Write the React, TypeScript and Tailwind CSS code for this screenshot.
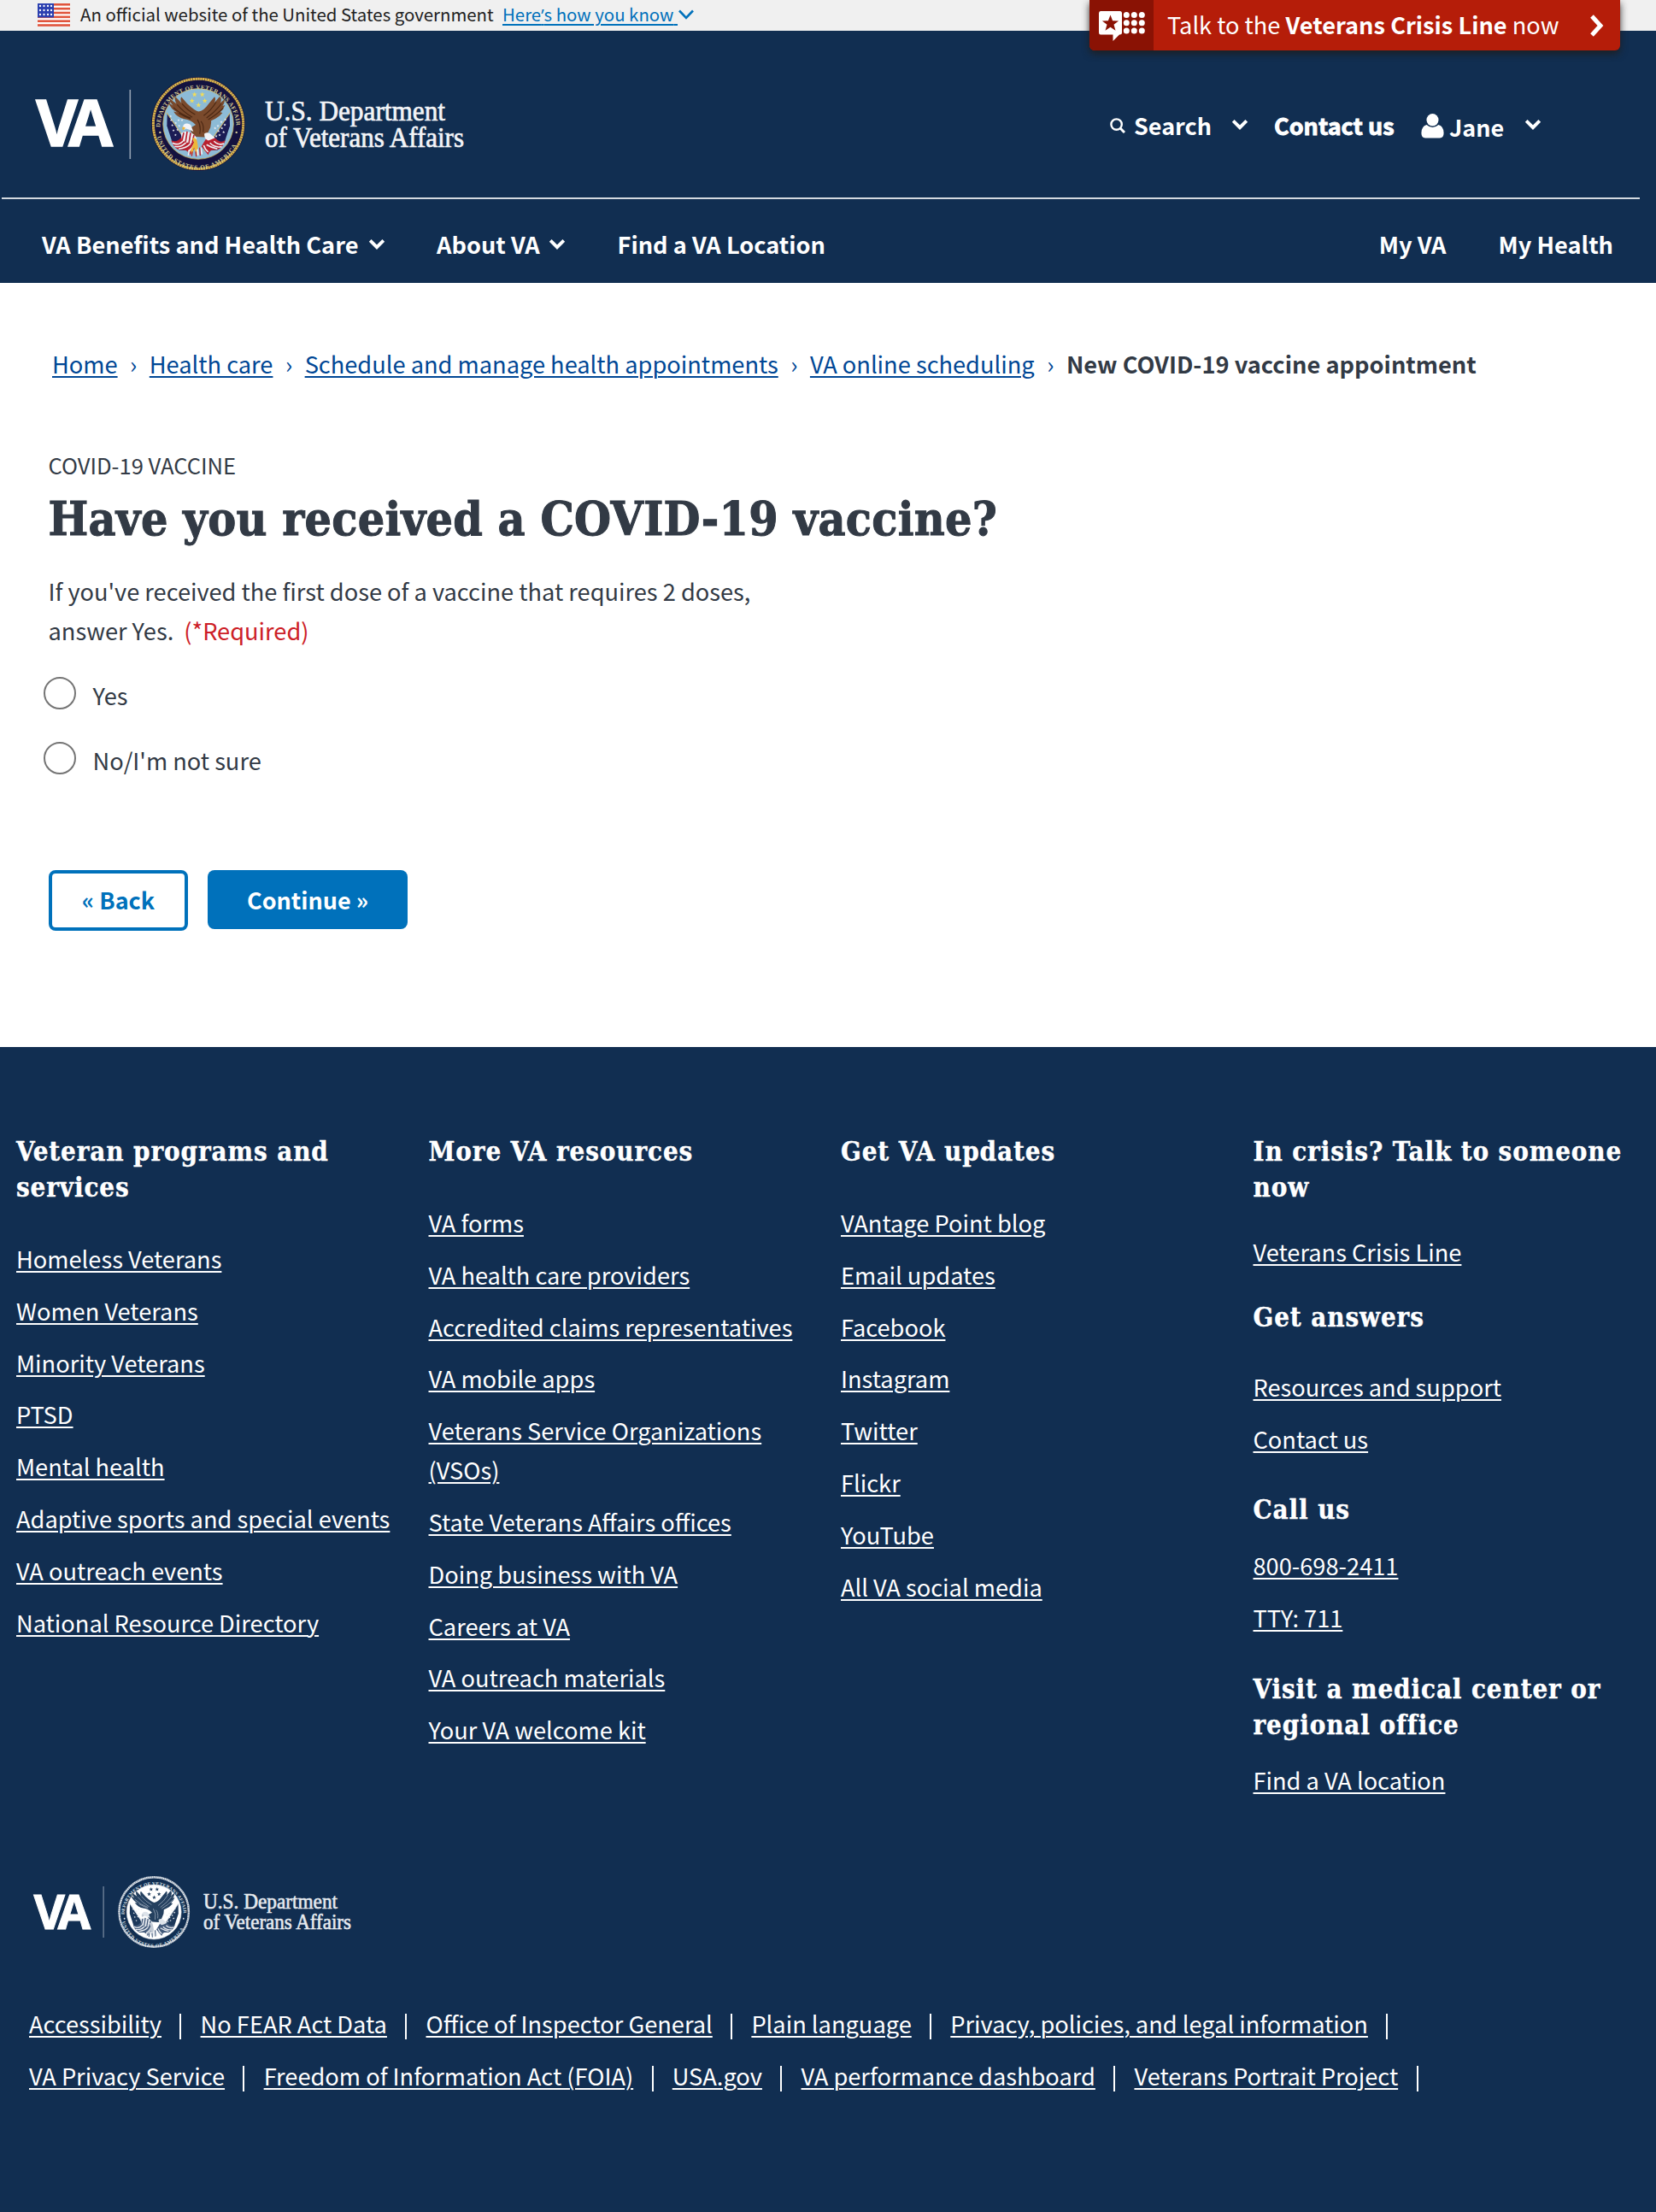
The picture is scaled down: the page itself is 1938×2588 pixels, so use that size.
import React from "react";

const STAR = "M0 -10 L2.6 -3.2 L9.6 -3.1 L4 1.3 L6 8.2 L0 4.2 L-6 8.2 L-4 1.3 L-9.6 -3.1 L-2.6 -3.2 Z";

function Star({ x, y, s, fill }: { x: number; y: number; s: number; fill: string }) {
  return <path d={STAR} fill={fill} transform={`translate(${x} ${y}) scale(${s})`} />;
}

const LEFT_STARS = [[122, 180], [138, 190], [126, 198], [150, 200], [130, 216], [144, 214], [160, 180], [137, 232], [120, 166], [148, 180]];
const RIGHT_STARS = [[312, 178], [298, 186], [310, 196], [286, 200], [300, 208], [288, 218], [276, 208], [306, 222], [292, 232], [280, 236]];

type Palette = {
  id: string;
  ring: string;
  gold: string;
  text: string;
  field: string;
  wing: string;
  wingDark: string;
  head: string;
  flag: string;
  red: string;
  white: string;
  beak: string;
  star: string;
};

const COLOR: Palette = {
  id: "c", ring: "#14123f", gold: "#e0b84a", text: "#d9cf95", field: "#8dbbd6", wing: "#7a4a2c", wingDark: "#4c2813",
  head: "#f2f4f8", flag: "#1b1c55", red: "#b8202f", white: "#eef0f4", beak: "#edb63a", star: "#f0dc5a",
};
const MONO: Palette = {
  id: "m", ring: "#112e51", gold: "#dfe4ea", text: "#dfe4ea", field: "#ffffff", wing: "#24405f", wingDark: "#8c9bae",
  head: "#dde3ea", flag: "#1c385a", red: "#41597a", white: "#e6eaef", beak: "#c2cad5", star: "#24405f",
};

function Seal({ p }: { p: Palette }) {
  return (
    <g>
      <circle cx="217" cy="193" r="165" fill={p.ring} />
      <circle cx="217" cy="193" r="158" fill="none" stroke={p.gold} strokeWidth="9" />
      <circle cx="217" cy="193" r="158" fill="none" stroke={p.ring} strokeWidth="9" strokeDasharray="2.5 6" opacity="0.55" />
      <circle cx="217" cy="193" r="124" fill={p.field} stroke={p.gold} strokeWidth="2" />
      <path id={`${p.id}-top`} d="M83 205 A134 134 0 1 1 351 205" fill="none" />
      <path id={`${p.id}-bottom`} d="M72 238 A149 149 0 0 0 362 238" fill="none" />
      <text fill={p.text} className="font-['Liberation_Serif'] text-[21px] font-bold">
        <textPath href={`#${p.id}-top`} textLength="428" lengthAdjust="spacing">DEPARTMENT OF VETERANS AFFAIRS</textPath>
      </text>
      <text fill={p.text} className="font-['Liberation_Serif'] text-[21px] font-bold">
        <textPath href={`#${p.id}-bottom`} textLength="366" lengthAdjust="spacing">UNITED STATES OF AMERICA</textPath>
      </text>
      <circle cx="83" cy="223" r="3.5" fill={p.text} />
      <circle cx="351" cy="223" r="3.5" fill={p.text} />

      {[[204, 90], [231, 90], [195, 112], [240, 112], [218, 127]].map(([x, y]) => (
        <Star key={`${x}-${y}`} x={x} y={y} s={0.95} fill={p.star} />
      ))}

      <path d="M108 157 L192 285 L150 285 Q132 272 124 252 L107 200 Z" fill={p.flag} />
      <path d="M327 157 L243 285 L285 285 Q303 272 311 252 L328 200 Z" fill={p.flag} />
      <path d="M106 154 L200 290" stroke={p.beak} strokeWidth="2.5" />
      <path d="M329 154 L236 290" stroke={p.beak} strokeWidth="2.5" />
      {LEFT_STARS.map(([x, y]) => <Star key={`l${x}-${y}`} x={x} y={y} s={0.45} fill={p.white} />)}
      {RIGHT_STARS.map(([x, y]) => <Star key={`r${x}-${y}`} x={x} y={y} s={0.5} fill={p.white} />)}

      <path d="M122 250 Q140 262 158 240 Q176 214 196 238 Q212 252 208 275 L188 302 Q180 282 158 285 Q132 284 122 250Z" fill={p.red} />
      <path d="M127 260 Q148 272 166 250 M134 272 Q158 278 178 254 M148 281 Q176 278 190 262 M162 238 L196 240 M168 228 L188 228 M182 290 Q196 280 204 262" stroke={p.white} strokeWidth="5" fill="none" />
      <path d="M312 250 Q294 262 280 246 Q262 232 244 246 L228 272 L252 302 Q256 282 276 285 Q302 284 312 250Z" fill={p.red} />
      <path d="M307 262 Q288 270 272 254 M300 273 Q276 278 258 260 M284 281 Q262 276 246 266 M252 292 Q240 282 236 268" stroke={p.white} strokeWidth="5" fill="none" />

      <path
        d="M208 196 Q190 178 168 176 Q142 170 130 150 L143 153 Q120 140 112 118 L128 129 Q118 118 118 106 L140 122 Q132 108 137 98 L158 120 Q152 104 158 99 L178 122 Q206 148 218 150 Q236 148 254 122 L274 98 Q280 104 274 118 L292 97 Q302 104 294 120 L308 108 Q312 118 302 130 L311 127 Q306 142 294 152 L302 154 Q288 172 262 182 Q264 202 252 222 L238 240 L210 238 Q190 226 188 208 Z"
        fill={p.wing}
      />
      <path
        d="M143 125 Q164 150 196 170 M130 136 Q156 160 190 172 M160 122 Q180 146 206 160 M148 156 Q170 168 190 176 M280 116 Q262 146 236 164 M298 122 Q276 152 246 172 M304 138 Q282 160 252 178 M226 184 Q238 196 234 222 M214 178 Q228 200 222 228"
        stroke={p.wingDark}
        strokeWidth="3.5"
        fill="none"
      />
      <path d="M162 206 Q164 191 178 192 Q192 193 194 206 L200 220 Q184 212 174 210 Q164 218 162 206Z" fill={p.head} />
      <path d="M163 203 Q158 208 164 216 Q170 212 172 207Z" fill={p.beak} />
      <path d="M238 228 Q252 218 266 234 L276 242 Q264 248 252 252 Q238 246 238 228Z" fill={p.head} />
      <path d="M156 226 Q176 212 204 232 L212 246 L190 262 L160 252 Z" fill={p.white} />
      <path d="M166 224 L160 252 M178 220 L172 258 M190 224 L184 262 M202 232 L196 258" stroke={p.red} strokeWidth="5" />
      <path d="M196 244 Q206 238 212 250 L216 272 L212 306 L202 276 L194 308 L190 288 L202 258 Z" fill={p.beak} />
      <path d="M214 282 L216 304 M186 284 L182 304 M226 276 L230 300" stroke={p.white} strokeWidth="5" />
      <path d="M208 290 L210 308 M196 290 L194 306 M222 276 L224 304" stroke={p.red} strokeWidth="4" />
    </g>
  );
}

function HeaderLogo() {
  return (
    <svg viewBox="0 0 560 130" className="h-[130px] w-[560px] shrink-0 overflow-visible font-normal">
      <text x="42 80" y="91" fill="#fff" stroke="#fff" strokeWidth="1.4" className="font-['Open_Sans'] text-[75.5px] font-bold">VA</text>
      <rect x="151.5" y="25" width="1.6" height="81" fill="#93a1b3" />
      <g transform="translate(159.7 0.6) scale(0.33333)">
        <Seal p={COLOR} />
      </g>
      <text x="310" y="60.5" textLength="211" lengthAdjust="spacingAndGlyphs" fill="#f3f5f8" stroke="#f3f5f8" strokeWidth="0.7" className="font-['Liberation_Serif'] text-[33.5px]">U.S. Department</text>
      <text x="310" y="91.5" textLength="233" lengthAdjust="spacingAndGlyphs" fill="#f3f5f8" stroke="#f3f5f8" strokeWidth="0.7" className="font-['Liberation_Serif'] text-[33.5px]">of Veterans Affairs</text>
    </svg>
  );
}

function FooterLogo() {
  return (
    <svg viewBox="0 0 420 110" className="block h-[110px] w-[420px] overflow-visible">
      <text x="39.5 67.5" y="77" fill="#fff" stroke="#fff" strokeWidth="1" className="font-['Open_Sans'] text-[56px] font-bold">VA</text>
      <rect x="120.5" y="27" width="1.2" height="60" fill="#7d8ea3" />
      <g transform="translate(124.2 7.2) scale(0.258)">
        <Seal p={MONO} />
      </g>
      <text x="238" y="53" textLength="157" lengthAdjust="spacingAndGlyphs" fill="#e6eaef" stroke="#e6eaef" strokeWidth="0.6" className="font-['Liberation_Serif'] text-[25px]">U.S. Department</text>
      <text x="238" y="77" textLength="173" lengthAdjust="spacingAndGlyphs" fill="#e6eaef" stroke="#e6eaef" strokeWidth="0.6" className="font-['Liberation_Serif'] text-[25px]">of Veterans Affairs</text>
    </svg>
  );
}

function Flag() {
  return (
    <svg viewBox="0 0 38 27" className="mt-[4px] h-[27px] w-[38px] shrink-0">
      <rect width="38" height="27" fill="#fff" />
      {[0, 1, 2, 3, 4, 5].map((i) => (
        <rect key={i} y={i * 4.85} width="38" height="2.6" fill="#e0543c" />
      ))}
      <rect width="19" height="16.5" fill="#2a3fb0" />
      {[3, 8, 13].map((y) =>
        [3, 7.5, 12, 16].map((x) => <circle key={`${x}-${y}`} cx={x} cy={y} r="1.15" fill="#fff" />)
      )}
    </svg>
  );
}

function Chevron({ className }: { className: string }) {
  return (
    <svg viewBox="0 0 20 13" className={`h-[13px] w-[20px] shrink-0 ${className}`}>
      <path d="M2.2 2.4 L10 10.2 L17.8 2.4" fill="none" stroke="#fff" strokeWidth="3.9" />
    </svg>
  );
}

function CrisisIcon() {
  return (
    <svg viewBox="0 0 75 59" className="h-[59px] w-[75px]">
      <path d="M13 13 H35.5 Q38 13 38 15.5 V38 Q38 40.5 35.5 40.5 H35 L27.5 48 V40.5 H13 Q11 40.5 11 38 V15.5 Q11 13 13 13Z" fill="#fff" />
      <path d={STAR} transform="translate(24.5 27.5) scale(1)" fill="#8a1204" />
      {[17.5, 26.8, 36].map((y) => [43.3, 52.3, 61.3].map((x) => <circle key={`${x}-${y}`} cx={x} cy={y} r="3.5" fill="#fff" />))}
    </svg>
  );
}

function FooterHeading({ children, className = "" }: { children: React.ReactNode; className?: string }) {
  return (
    <h2 className={`font-['DejaVu_Serif_Condensed','DejaVu_Serif',serif] text-[31px] leading-[42px] font-bold tracking-[0.9px] whitespace-nowrap [-webkit-text-stroke:0.4px_white] ${className}`}>
      {children}
    </h2>
  );
}

function Links({ items, className = "" }: { items: string[]; className?: string }) {
  return (
    <ul className={`flex flex-col gap-[14.8px] ${className}`}>
      {items.map((item) => (
        <li key={item} className="leading-[46px]">
          <a className="whitespace-pre-line underline decoration-[1.8px] underline-offset-[3px]">{item}</a>
        </li>
      ))}
    </ul>
  );
}

function LegalRow({ items }: { items: string[] }) {
  return (
    <div className="flex h-[61px] items-start leading-[46px]">
      {items.map((item) => (
        <React.Fragment key={item}>
          <a className="whitespace-nowrap underline decoration-[1.8px] underline-offset-[3px]">{item}</a>
          <span className="mt-[12px] mr-[22.2px] ml-[21.4px] h-[30px] w-[2px] shrink-0 bg-white" />
        </React.Fragment>
      ))}
    </div>
  );
}

const CRUMBS = ["Home", "Health care", "Schedule and manage health appointments", "VA online scheduling"];

export default function App() {
  return (
    <div className="relative h-[2588px] w-[1938px] overflow-hidden bg-white font-['Noto_Sans_CJK_SC',sans-serif] text-[27.22px] text-[#323a45]">
      <div className="flex h-[36px] items-start bg-[#f0f0f0] pl-[44px] text-[20.4px] leading-[33px] text-[#212121]">
        <Flag />
        <span className="ml-[12px] w-[482px] whitespace-nowrap">An official website of the United States government</span>
        <a className="ml-[12px] w-[206px] whitespace-pre text-[#0071bb] underline decoration-[2px] underline-offset-[3px]">
          Here<span className="font-['Open_Sans']">’</span>s how you know{" "}
        </a>
        <svg viewBox="0 0 18 12" className="mt-[11px] h-[12px] w-[18px]">
          <path d="M1 1.5 L9 9.8 L17 1.5" fill="none" stroke="#0071bb" strokeWidth="2.6" />
        </svg>
      </div>

      <div className="absolute top-0 left-[1275px] flex h-[59px] w-[621px] items-start overflow-visible rounded-b-[6px] bg-[#b51d09] text-white shadow-[0_4px_8px_rgba(30,30,30,0.9)]">
        <div className="h-[59px] w-[75px] rounded-bl-[6px] bg-[#8a1204]">
          <CrisisIcon />
        </div>
        <span className="ml-[16px] w-[458px] text-[27.2px] leading-[57px] whitespace-nowrap">
          Talk to the <b>Veterans Crisis Line</b> now
        </span>
        <svg viewBox="0 0 18 28" className="mt-[16px] ml-[36px] h-[28px] w-[18px]">
          <path d="M3 3 L13 14 L3 25" fill="none" stroke="#fff" strokeWidth="5" />
        </svg>
      </div>

      <header className="bg-[#112e51] text-[27px] font-bold text-white">
        <div className="flex h-[195px] items-start pt-[44px]">
          <HeaderLogo />
          <div className="ml-[739px] flex items-start pt-[45.5px] leading-[42px]">
            <svg viewBox="0 0 18 18" className="mt-[12.5px] h-[18px] w-[18px]">
              <circle cx="7.6" cy="7.6" r="6.2" fill="none" stroke="#fff" strokeWidth="2.4" />
              <path d="M12 12 L17 17" stroke="#fff" strokeWidth="3" />
            </svg>
            <span className="ml-[10px] w-[91px]">Search</span>
            <Chevron className="mt-[13.5px] ml-[23px]" />
            <span className="ml-[30px] w-[142px] whitespace-nowrap [-webkit-text-stroke:0.9px_white]">Contact us</span>
            <svg viewBox="0 0 27 29" className="mt-[7.5px] ml-[30px] h-[29px] w-[27px]">
              <ellipse cx="13.5" cy="7.3" rx="7" ry="7.3" fill="#fff" />
              <path d="M6.5 13 Q13.5 19 20.5 13 Q26.6 15 26.6 22.5 Q26.6 28.4 22 28.4 H5 Q0.4 28.4 0.4 22.5 Q0.4 15 6.5 13Z" fill="#fff" />
            </svg>
            <span className="mt-[2.5px] ml-[6px] w-[63px]">Jane</span>
            <Chevron className="mt-[13.5px] ml-[24.5px]" />
          </div>
        </div>
        <div className="mr-[19px] ml-[2px] h-[2px] bg-[#d3d9e0]" />
        <nav className="flex h-[97.5px] items-start pt-[31px] pl-[49px] text-[27.2px] leading-[42px] whitespace-nowrap">
          <span className="w-[372px]">VA Benefits and Health Care</span>
          <Chevron className="mt-[15px] ml-[10px]" />
          <span className="ml-[60px] w-[121px]">About VA</span>
          <Chevron className="mt-[15px] ml-[10px]" />
          <span className="ml-[60.5px] w-[243px]">Find a VA Location</span>
          <span className="ml-auto">My VA</span>
          <span className="mr-[50px] ml-[61px]">My Health</span>
        </nav>
      </header>

      <main className="h-[894.5px]">
        <div className="flex pt-[71.5px] pl-[61px] leading-[46px] whitespace-nowrap text-[#004795]">
          {CRUMBS.map((c) => (
            <React.Fragment key={c}>
              <a className="underline decoration-[2px] underline-offset-[3px]">{c}</a>
              <span className="w-[37.2px] text-center">›</span>
            </React.Fragment>
          ))}
          <b className="text-[#323a45]">New COVID-19 vaccine appointment</b>
        </div>
        <div className="pl-[56.5px]">
          <p className="mt-[76px] text-[25.6px] leading-[40px]">COVID-19 VACCINE</p>
          <h1 className="mt-[4px] font-['DejaVu_Serif_Condensed','DejaVu_Serif',serif] text-[55px] leading-[77px] font-bold tracking-[0.27px] whitespace-nowrap [-webkit-text-stroke:1px_#323a45]">
            Have you received a COVID-19 vaccine?
          </h1>
          <p className="mt-[23px] leading-[46px]">
            If you've received the first dose of a vaccine that requires 2 doses,
            <br />
            answer Yes.<span className="ml-[12px] text-[#cd2026]">(*Required)</span>
          </p>
          {["Yes", "No/I'm not sure"].map((label) => (
            <label key={label} className="-ml-[5.5px] flex h-[76px] items-start pt-[32px]">
              <span className="h-[38px] w-[38px] rounded-full border-2 border-[#757575] bg-white" />
              <span className="ml-[19.5px] leading-[43px]">{label}</span>
            </label>
          ))}
          <div className="mt-[106px] ml-[0.5px] flex items-start font-bold">
            <button className="h-[70.5px] w-[163px] rounded-[8px] border-[4px] border-[#0071bb] text-[27px] leading-[62px] text-[#0071bb]">« Back</button>
            <button className="ml-[23px] h-[69px] w-[234px] rounded-[8px] bg-[#0071bb] text-[27px] leading-[69px] text-white">Continue »</button>
          </div>
        </div>
      </main>

      <footer className="h-[1363px] bg-[#112e51] pt-[100.5px] text-white">
        <div className="grid h-[868px] grid-cols-[482.5px_482.5px_482.5px_460px] pl-[19px]">
          <div>
            <FooterHeading>Veteran programs and<br />services</FooterHeading>
            <Links className="mt-[39.5px]" items={["Homeless Veterans", "Women Veterans", "Minority Veterans", "PTSD", "Mental health", "Adaptive sports and special events", "VA outreach events", "National Resource Directory"]} />
          </div>
          <div>
            <FooterHeading>More VA resources</FooterHeading>
            <Links className="mt-[39.5px]" items={["VA forms", "VA health care providers", "Accredited claims representatives", "VA mobile apps", "Veterans Service Organizations\n(VSOs)", "State Veterans Affairs offices", "Doing business with VA", "Careers at VA", "VA outreach materials", "Your VA welcome kit"]} />
          </div>
          <div>
            <FooterHeading>Get VA updates</FooterHeading>
            <Links className="mt-[39.5px]" items={["VAntage Point blog", "Email updates", "Facebook", "Instagram", "Twitter", "Flickr", "YouTube", "All VA social media"]} />
          </div>
          <div>
            <FooterHeading>In crisis? Talk to someone<br />now</FooterHeading>
            <Links className="mt-[31.5px]" items={["Veterans Crisis Line"]} />
            <FooterHeading className="mt-[33px]">Get answers</FooterHeading>
            <Links className="mt-[37px]" items={["Resources and support", "Contact us"]} />
            <FooterHeading className="mt-[39px]">Call us</FooterHeading>
            <Links className="mt-[21.5px]" items={["800-698-2411", "TTY: 711"]} />
            <FooterHeading className="mt-[39.5px]">Visit a medical center or<br />regional office</FooterHeading>
            <Links className="mt-[20.5px]" items={["Find a VA location"]} />
          </div>
        </div>
        <div className="-mt-[13.5px]">
          <FooterLogo />
        </div>
        <div className="mt-[54px] pl-[34px]">
          <LegalRow items={["Accessibility", "No FEAR Act Data", "Office of Inspector General", "Plain language", "Privacy, policies, and legal information"]} />
          <LegalRow items={["VA Privacy Service", "Freedom of Information Act (FOIA)", "USA.gov", "VA performance dashboard", "Veterans Portrait Project"]} />
        </div>
      </footer>
    </div>
  );
}
